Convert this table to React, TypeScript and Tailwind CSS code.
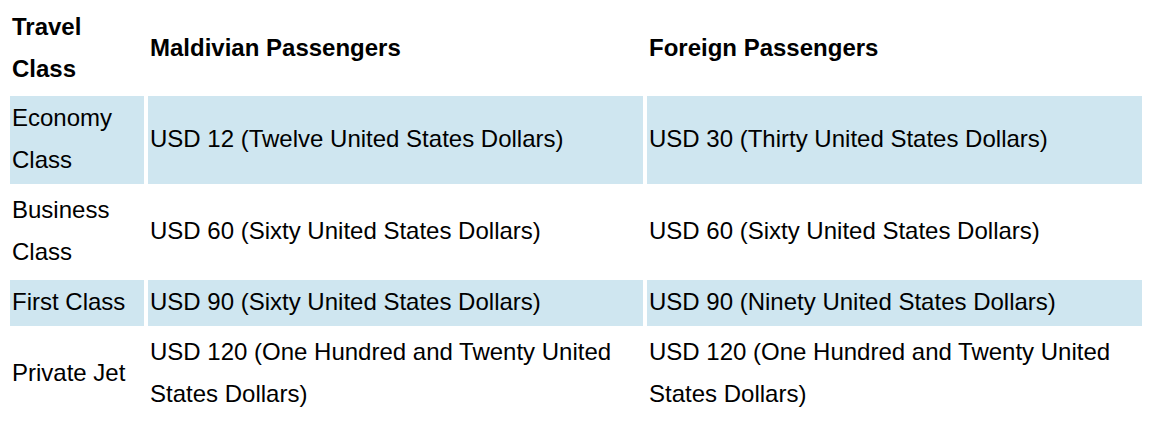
const rows = [
  {
    travelClass: "Economy Class",
    maldivian: "USD 12 (Twelve United States Dollars)",
    foreign: "USD 30 (Thirty United States Dollars)",
    shaded: true,
  },
  {
    travelClass: "Business Class",
    maldivian: "USD 60 (Sixty United States Dollars)",
    foreign: "USD 60 (Sixty United States Dollars)",
    shaded: false,
  },
  {
    travelClass: "First Class",
    maldivian: "USD 90 (Sixty United States Dollars)",
    foreign: "USD 90 (Ninety United States Dollars)",
    shaded: true,
  },
  {
    travelClass: "Private Jet",
    maldivian: "USD 120 (One Hundred and Twenty United States Dollars)",
    foreign: "USD 120 (One Hundred and Twenty United States Dollars)",
    shaded: false,
  },
];

export default function App() {
  return (
    <div className="min-h-[426px] bg-white px-[6px] font-['Liberation_Sans',Arial,sans-serif] text-[24px] leading-[42px] text-black">
      <table className="w-full table-fixed border-separate border-spacing-[4px]">
        <colgroup>
          <col className="w-[134px]" />
          <col />
          <col />
        </colgroup>
        <thead>
          <tr>
            <th className="px-[2px] py-[2px] text-left align-middle font-bold">Travel Class</th>
            <th className="px-[2px] py-[2px] text-left align-middle font-bold">Maldivian Passengers</th>
            <th className="px-[2px] py-[2px] text-left align-middle font-bold">Foreign Passengers</th>
          </tr>
        </thead>
        <tbody>
          {rows.map((row) => (
            <tr key={row.travelClass} className={row.shaded ? "bg-[#cfe6f0]" : ""}>
              <td className="px-[2px] pt-px pb-[3px] align-middle">{row.travelClass}</td>
              <td className="px-[2px] pt-px pb-[3px] align-middle">{row.maldivian}</td>
              <td className="px-[2px] pt-px pb-[3px] align-middle">{row.foreign}</td>
            </tr>
          ))}
        </tbody>
      </table>
    </div>
  );
}
